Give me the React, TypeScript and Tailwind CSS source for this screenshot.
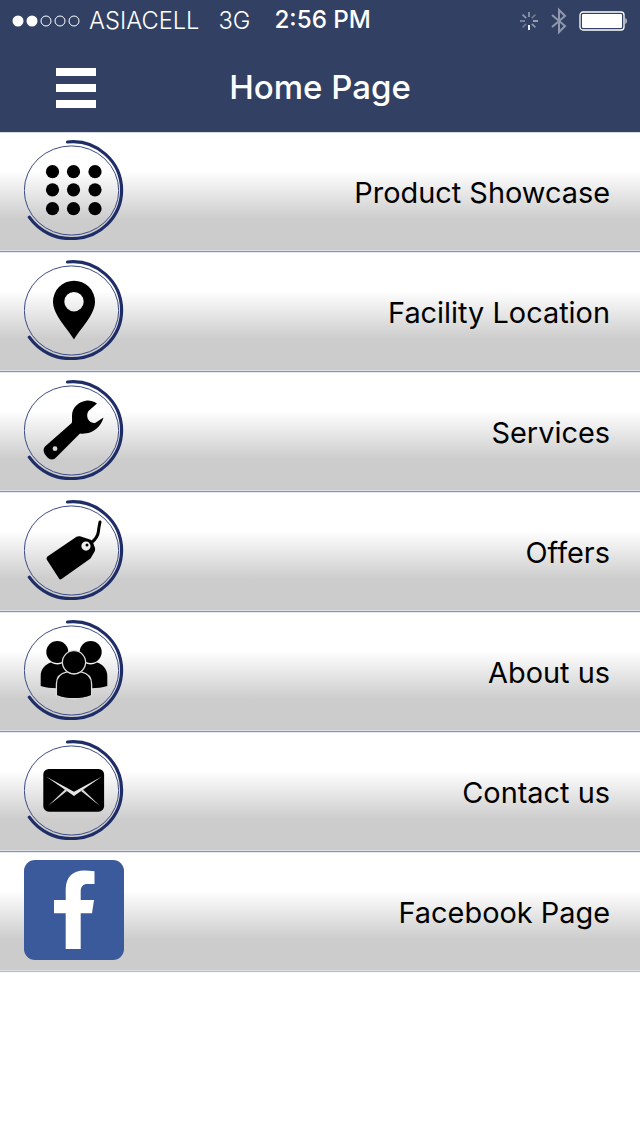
import React from "react";

const font = { fontFamily: "Inter, 'Liberation Sans', sans-serif" };

function Ring({ children }: { children: React.ReactNode }) {
  return (
    <svg width="100" height="100" viewBox="0 0 100 100" className="shrink-0">
      <ellipse cx="47.5" cy="50.5" rx="47.2" ry="44.6" fill="none" stroke="#3c4a85" strokeWidth="1" />
      <path d="M43.5 2 A49 48.5 0 0 1 97.6 50 A49 48.5 0 0 1 49 98.5 A50 50 0 0 1 5.3 77.2" fill="none" stroke="#1f2d66" strokeWidth="3.2" strokeLinecap="round" />
      {children}
    </svg>
  );
}

const Dots = () => (
  <g fill="#000">
    {[28.5, 49.5, 71].flatMap((x) =>
      [31.7, 49.8, 68.7].map((y) => <circle key={`${x}-${y}`} cx={x} cy={y} r="6.6" />)
    )}
  </g>
);

const Pin = () => (
  <path
    fillRule="evenodd"
    d="M50 79.5 C44 69 29 55 29 41.7 A21 21 0 0 1 71 41.7 C71 55 56 69 50 79.5Z M50 32 A9.7 9.7 0 1 0 50 51.4 A9.7 9.7 0 1 0 50 32Z"
    fill="#000"
  />
);

const Wrench = () => (
  <path
    fillRule="evenodd"
    fill="#000"
    d="M73 23.5 C69 21 66 20.3 63 20.5 C54 21.5 48 28 48 36 C48 38.5 48.3 41 47.7 43 L21 66.5 C19 68.5 19.3 72 21 74.5 L23.5 77.5 C26 80 30 80 32 77.5 L56 53.5 C59 54 63 53.5 66 52.5 C72 50.5 77.5 45 79.5 37.5 L71.5 42.7 C68 43.5 65 41.5 63.8 38.8 C62.8 36 63 33 64.5 31 Z M31 66.3 A2.4 2.4 0 1 0 31 71.1 A2.4 2.4 0 1 0 31 66.3Z"
  />
);

const Tag = () => (
  <g>
    <path
      fillRule="evenodd"
      fill="#000"
      d="M23.5 56.5 L52.5 36.8 C53.5 36.1 55 36.1 56 36.3 L66 39.5 C67.5 40 68.5 41 69 42.5 L71 48 C71.3 49.5 71 51 70.3 52 L66.5 58.5 L37.5 79 C36.5 79.8 35.5 79.5 35 78.5 L23 60 C22.3 59 22.5 57.3 23.5 56.5Z M62 41.5 A4.6 4.6 0 1 0 62 50.7 A4.6 4.6 0 1 0 62 41.5Z"
    />
    <circle cx="63" cy="45" r="1.5" fill="#000" />
    <path d="M67 43 C71 40 74 36 74.5 31 C74.8 27 75.5 25 76 22" fill="none" stroke="#000" strokeWidth="3" strokeLinecap="round" />
  </g>
);

const People = () => (
  <g fill="#000">
    <circle cx="33.3" cy="32" r="11" />
    <circle cx="66.7" cy="32" r="11" />
    <path d="M16.7 66 V56 C16.7 49 21 44.5 27 42.5 C31 45 36 45 39.5 42.5 C46 44 50 48 50 55 V66 C40 69 26 69 16.7 66Z" />
    <path d="M50 66 V55 C50 48 54 44 60.5 42.5 C64 45 69 45 73 42.5 C79 44.5 83.3 49 83.3 56 V66 C74 69 60 69 50 66Z" />
    <g stroke="#dcdcdc" strokeWidth="1.3">
      <circle cx="50" cy="42.3" r="11.6" />
      <path d="M32.4 75.5 V64 C32.4 57 37 53 43 51.8 C47 54.8 53 54.8 57 51.8 C63 53 67.6 57 67.6 64 V75.5 C57 79.8 43 79.8 32.4 75.5Z" />
    </g>
  </g>
);

const Mail = () => (
  <g>
    <rect x="19.3" y="29" width="60.8" height="42.7" rx="5.5" fill="#000" />
    <path d="M22 36.5 L50 51.8 L78 36.5 L50 56Z" fill="#e4e4e4" />
    <path d="M24 66 L41 49.5 L43 51Z M76 66 L57 51 L59 49.5Z" fill="#d8d8d8" />
  </g>
);

const Facebook = () => (
  <svg width="100" height="100" viewBox="0 0 100 100" className="shrink-0">
    <rect x="0" y="0" width="100" height="100" rx="11" fill="#3a5a9b" />
    <path
      fill="#fff"
      d="M56.7 89 V53.3 H68 L70 40 H56.7 V31.5 C56.7 26.5 59 24 63.5 24 H70.5 V11.2 C67 10.7 63.5 10.5 60 10.5 C49 10.5 41.7 17 41.7 29.5 V40 H30 V53.3 H41.7 V89Z"
    />
  </svg>
);

const rows: { label: string; icon: React.ReactNode }[] = [
  { label: "Product Showcase", icon: <Ring><Dots /></Ring> },
  { label: "Facility Location", icon: <Ring><Pin /></Ring> },
  { label: "Services", icon: <Ring><Wrench /></Ring> },
  { label: "Offers", icon: <Ring><Tag /></Ring> },
  { label: "About us", icon: <Ring><People /></Ring> },
  { label: "Contact us", icon: <Ring><Mail /></Ring> },
  { label: "Facebook Page", icon: <Facebook /> },
];

function Row({ label, icon, last }: { label: string; icon: React.ReactNode; last: boolean }) {
  return (
    <div className="flex h-[120px] flex-col">
      <div className="flex h-[117px] items-center justify-between bg-[linear-gradient(to_bottom,#ffffff_0%,#ffffff_32%,#cccccc_74%,#cccccc_100%)] pl-6 pr-[30px]">
        <div className="relative top-[-1.5px]">{icon}</div>
        <span className="relative top-[1.5px] text-[28.9px] leading-none text-black">{label}</span>
      </div>
      <div className="h-px bg-[#dfdfe6]" />
      <div className={last ? "h-px bg-[#bdbdbd]" : "h-px bg-[#8f93a8]"} />
      <div className={last ? "h-px bg-[#f4f5f9]" : "h-px bg-[#e6e9f3]"} />
    </div>
  );
}

function StatusBar() {
  return (
    <div className="flex h-[41px] items-center text-white">
      <svg width="82" height="14" viewBox="0 0 82 14" className="ml-[12px] shrink-0">
        <circle cx="6" cy="7" r="5.5" fill="#fff" />
        <circle cx="20" cy="7" r="5.5" fill="#fff" />
        {[34, 48, 62].map((x) => (
          <circle key={x} cx={x} cy="7" r="5" fill="none" stroke="#fff" strokeWidth="1" />
        ))}
      </svg>
      <span className="ml-[-5px] text-[23.7px] font-light leading-none">ASIACELL</span>
      <span className="ml-[19px] text-[23.7px] font-light leading-none">3G</span>
      <span className="ml-[24px] text-[24.2px] font-medium leading-none">2:56 PM</span>
      <div className="ml-auto flex items-center">
        <svg width="22" height="22" viewBox="0 0 22 22" className="shrink-0">
          {[
            [11, 2, 11, 7, "#8d96ab"],
            [17.4, 4.6, 13.8, 8.2, "#6f7a94"],
            [20, 11, 15, 11, "#a3abbc"],
            [17.4, 17.4, 13.8, 13.8, "#8d96ab"],
            [11, 20, 11, 15, "#ffffff"],
            [4.6, 17.4, 8.2, 13.8, "#6a7590"],
            [2, 11, 7, 11, "#7c87a0"],
            [4.6, 4.6, 8.2, 8.2, "#8d96ab"],
          ].map(([x1, y1, x2, y2, c], i) => (
            <line key={i} x1={x1} y1={y1} x2={x2} y2={y2} stroke={c as string} strokeWidth="1.8" />
          ))}
        </svg>
        <svg width="18" height="28" viewBox="0 0 18 28" className="ml-[10px] shrink-0">
          <path d="M2 8 L15 19 L9 25 V3 L15 9 L2 20" fill="none" stroke="#8f98ad" strokeWidth="2" />
        </svg>
        <svg width="48" height="20" viewBox="0 0 48 20" className="ml-[11px] mr-[13px] shrink-0">
          <rect x="1" y="1" width="44" height="18" rx="3" fill="none" stroke="#fff" strokeWidth="1.3" />
          <rect x="3" y="3" width="40" height="14" rx="1" fill="#fff" />
          <path d="M46.5 7 C48 8 48 12 46.5 13Z" fill="#fff" />
        </svg>
      </div>
    </div>
  );
}

export default function App() {
  return (
    <div className="min-h-[1136px] bg-white" style={font}>
      <div className="h-[132px] bg-[#324163]">
        <StatusBar />
        <div className="relative flex h-[91px] items-center justify-center pt-[2px]">
          <div className="absolute left-[56px] top-[27px] flex w-10 flex-col gap-2">
            <div className="h-2 bg-white" />
            <div className="h-2 bg-white" />
            <div className="h-2 bg-white" />
          </div>
          <span className="text-[33px] font-medium leading-none text-white">Home Page</span>
        </div>
      </div>
      <div className="h-px bg-[#d6dae6]" />
      {rows.map((r, i) => (
        <Row key={r.label} label={r.label} icon={r.icon} last={i === rows.length - 1} />
      ))}
    </div>
  );
}
